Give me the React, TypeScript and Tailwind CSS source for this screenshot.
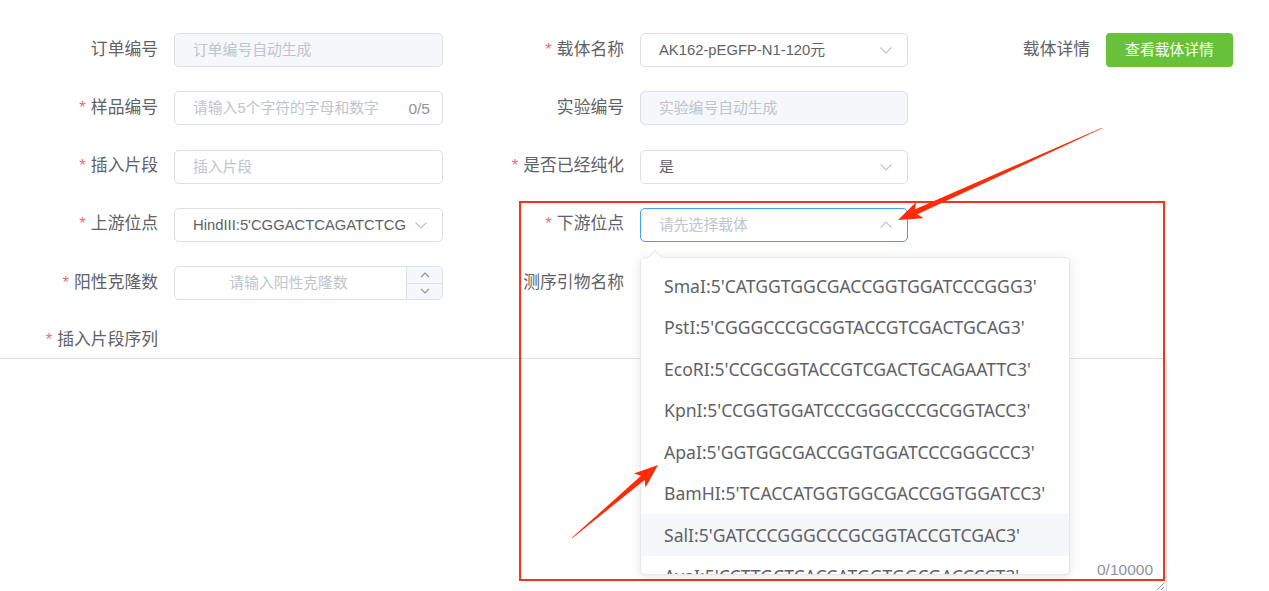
import React from "react";

function Star() {
  return <span className="text-[#f56c6c] mr-[5px]">*</span>;
}

function Label({ text, req, w }: { text: string; req?: boolean; w: string }) {
  return (
    <div className={`${w} shrink-0 pr-4 flex items-center justify-end text-[16.8px] text-[#606266] leading-none`}>
      {req && <Star />}
      {text}
    </div>
  );
}

function Chevron({ up }: { up?: boolean }) {
  return (
    <svg width="14" height="14" viewBox="0 0 14 14" className="shrink-0">
      <polyline
        points={up ? "1.5,9.5 7,4 12.5,9.5" : "1.5,4.5 7,10 12.5,4.5"}
        fill="none"
        stroke="#c0c4cc"
        strokeWidth="1.2"
      />
    </svg>
  );
}

function Box({
  w,
  children,
  disabled,
  focus,
}: {
  w: string;
  children?: React.ReactNode;
  disabled?: boolean;
  focus?: boolean;
}) {
  return (
    <div
      className={`${w} shrink-0 h-[34px] rounded-[5px] border flex items-center pl-[18px] pr-[14px] text-[14.8px] overflow-hidden whitespace-nowrap ${
        focus ? "border-[#409eff]" : "border-[#dcdfe6]"
      } ${disabled ? "bg-[#f5f7fa]" : "bg-white"}`}
    >
      {children}
    </div>
  );
}

const items = [
  "SmaI:5'CATGGTGGCGACCGGTGGATCCCGGG3'",
  "PstI:5'CGGGCCCGCGGTACCGTCGACTGCAG3'",
  "EcoRI:5'CCGCGGTACCGTCGACTGCAGAATTC3'",
  "KpnI:5'CCGGTGGATCCCGGGCCCGCGGTACC3'",
  "ApaI:5'GGTGGCGACCGGTGGATCCCGGGCCC3'",
  "BamHI:5'TCACCATGGTGGCGACCGGTGGATCC3'",
  "SalI:5'GATCCCGGGCCCGCGGTACCGTCGAC3'",
  "AvaI:5'CCTTGCTCACCATGGTGGCGACCCCT3'",
];

export default function App() {
  return (
    <div className="relative w-[1269px] h-[591px] overflow-hidden bg-white font-['Liberation_Sans','Noto_Sans_CJK_SC',sans-serif]">
      <div className="flex flex-col pt-[33px] gap-[24.3px]">
        {/* Row 1 */}
        <div className="flex h-[34px]">
          <Label w="w-[174px]" text="订单编号" />
          <Box w="w-[269px]" disabled>
            <span className="text-[#c0c4cc]">订单编号自动生成</span>
          </Box>
          <Label w="w-[197px]" text="载体名称" req />
          <Box w="w-[268px]">
            <span className="flex-1 text-[#606266]">AK162-pEGFP-N1-120元</span>
            <Chevron />
          </Box>
          <Label w="w-[198px]" text="载体详情" />
          <div className="w-[127px] h-[34px] rounded-[4px] bg-[#67c23a] text-white text-[14.8px] flex items-center justify-center">
            查看载体详情
          </div>
        </div>
        {/* Row 2 */}
        <div className="flex h-[34px]">
          <Label w="w-[174px]" text="样品编号" req />
          <Box w="w-[269px]">
            <span className="flex-1 text-[#c0c4cc]">请输入5个字符的字母和数字</span>
            <span className="text-[#909399] text-[15.5px] mr-[-2px]">0/5</span>
          </Box>
          <Label w="w-[197px]" text="实验编号" />
          <Box w="w-[268px]" disabled>
            <span className="text-[#c0c4cc]">实验编号自动生成</span>
          </Box>
        </div>
        {/* Row 3 */}
        <div className="flex h-[34px]">
          <Label w="w-[174px]" text="插入片段" req />
          <Box w="w-[269px]">
            <span className="text-[#c0c4cc]">插入片段</span>
          </Box>
          <Label w="w-[197px]" text="是否已经纯化" req />
          <Box w="w-[268px]">
            <span className="flex-1 text-[#606266]">是</span>
            <Chevron />
          </Box>
        </div>
        {/* Row 4 */}
        <div className="flex h-[34px]">
          <Label w="w-[174px]" text="上游位点" req />
          <Box w="w-[269px]">
            <span className="flex-1 overflow-hidden text-[#606266]">HindIII:5'CGGACTCAGATCTCG</span>
            <span className="ml-[6px]">
              <Chevron />
            </span>
          </Box>
          <Label w="w-[197px]" text="下游位点" req />
          <Box w="w-[268px]" focus>
            <span className="flex-1 text-[#c0c4cc]">请先选择载体</span>
            <Chevron up />
          </Box>
        </div>
        {/* Row 5 */}
        <div className="flex h-[34px]">
          <Label w="w-[174px]" text="阳性克隆数" req />
          <div className="w-[269px] h-[34px] rounded-[5px] border border-[#dcdfe6] flex overflow-hidden text-[14.8px]">
            <div className="flex-1 flex items-center justify-center text-[#c0c4cc] pr-[4px]">请输入阳性克隆数</div>
            <div className="w-[36px] flex flex-col border-l border-[#dcdfe6] bg-[#f5f7fa]">
              <div className="flex-1 flex items-center justify-center border-b border-[#dcdfe6]">
                <svg width="12" height="8" viewBox="0 0 12 8">
                  <polyline points="2,6 6,2 10,6" fill="none" stroke="#909399" strokeWidth="1.1" />
                </svg>
              </div>
              <div className="flex-1 flex items-center justify-center">
                <svg width="12" height="8" viewBox="0 0 12 8">
                  <polyline points="2,2 6,6 10,2" fill="none" stroke="#909399" strokeWidth="1.1" />
                </svg>
              </div>
            </div>
          </div>
          <Label w="w-[197px]" text="测序引物名称" />
          <Box w="w-[268px]" />
        </div>
      </div>

      {/* Textarea label */}
      <div className="flex h-[34px] mt-[23.5px]">
        <Label w="w-[174px]" text="插入片段序列" req />
      </div>
      {/* Textarea */}
      <div className="relative w-[1167px] h-[240px] border-t border-r border-b border-[#dcdfe6] rounded-r-[5px]">
        <div className="absolute right-[13px] top-[203px] text-[15.5px] text-[#909399] leading-none">0/10000</div>
      </div>
      {/* resize handle */}
      <svg className="absolute left-[1155px] top-[581px]" width="10" height="10" viewBox="0 0 10 10">
        <line x1="2" y1="9" x2="9" y2="2" stroke="#909399" strokeWidth="1" />
        <line x1="6" y1="9" x2="9" y2="6" stroke="#909399" strokeWidth="1" />
      </svg>

      {/* Red annotation box */}
      <div className="absolute left-[519px] top-[201px] w-[646px] h-[380px] border-2 border-[#f5331c]" />

      {/* Dropdown */}
      <div className="absolute left-[650px] top-[252px] w-[10px] h-[10px] rotate-45 bg-white border-l border-t border-[#e4e7ed] z-10" />
      <div className="absolute left-[640px] top-[257px] w-[430px] h-[318px] bg-white border border-[#e4e7ed] rounded-[5px] shadow-[0_2px_12px_0_rgba(0,0,0,0.1)] overflow-hidden">
        <div className="pt-[7px] font-['Noto_Sans',sans-serif] text-[17.6px] text-[#606266]">
          {items.map((t, i) => (
            <div
              key={t}
              className={`h-[41.5px] flex items-center pl-[23px] whitespace-nowrap ${i === 6 ? "bg-[#f5f7fa]" : ""}`}
            >
              {t}
            </div>
          ))}
        </div>
      </div>

      {/* Arrows */}
      <svg className="absolute left-0 top-0 pointer-events-none" width="1269" height="591" viewBox="0 0 1269 591">
        <polygon
          points="1102.1,128.3 917.35,214.35 923.6,218.3 898,220 916.2,201.9 915.05,209.25 1101.9,127.7"
          fill="#ff2b05"
        />
        <polygon
          points="572.2,538.2 644.6,480.0 645.5,487.4 658,465 633.9,473.6 641.0,475.8 571.8,537.8"
          fill="#ff2b05"
        />
      </svg>
    </div>
  );
}
